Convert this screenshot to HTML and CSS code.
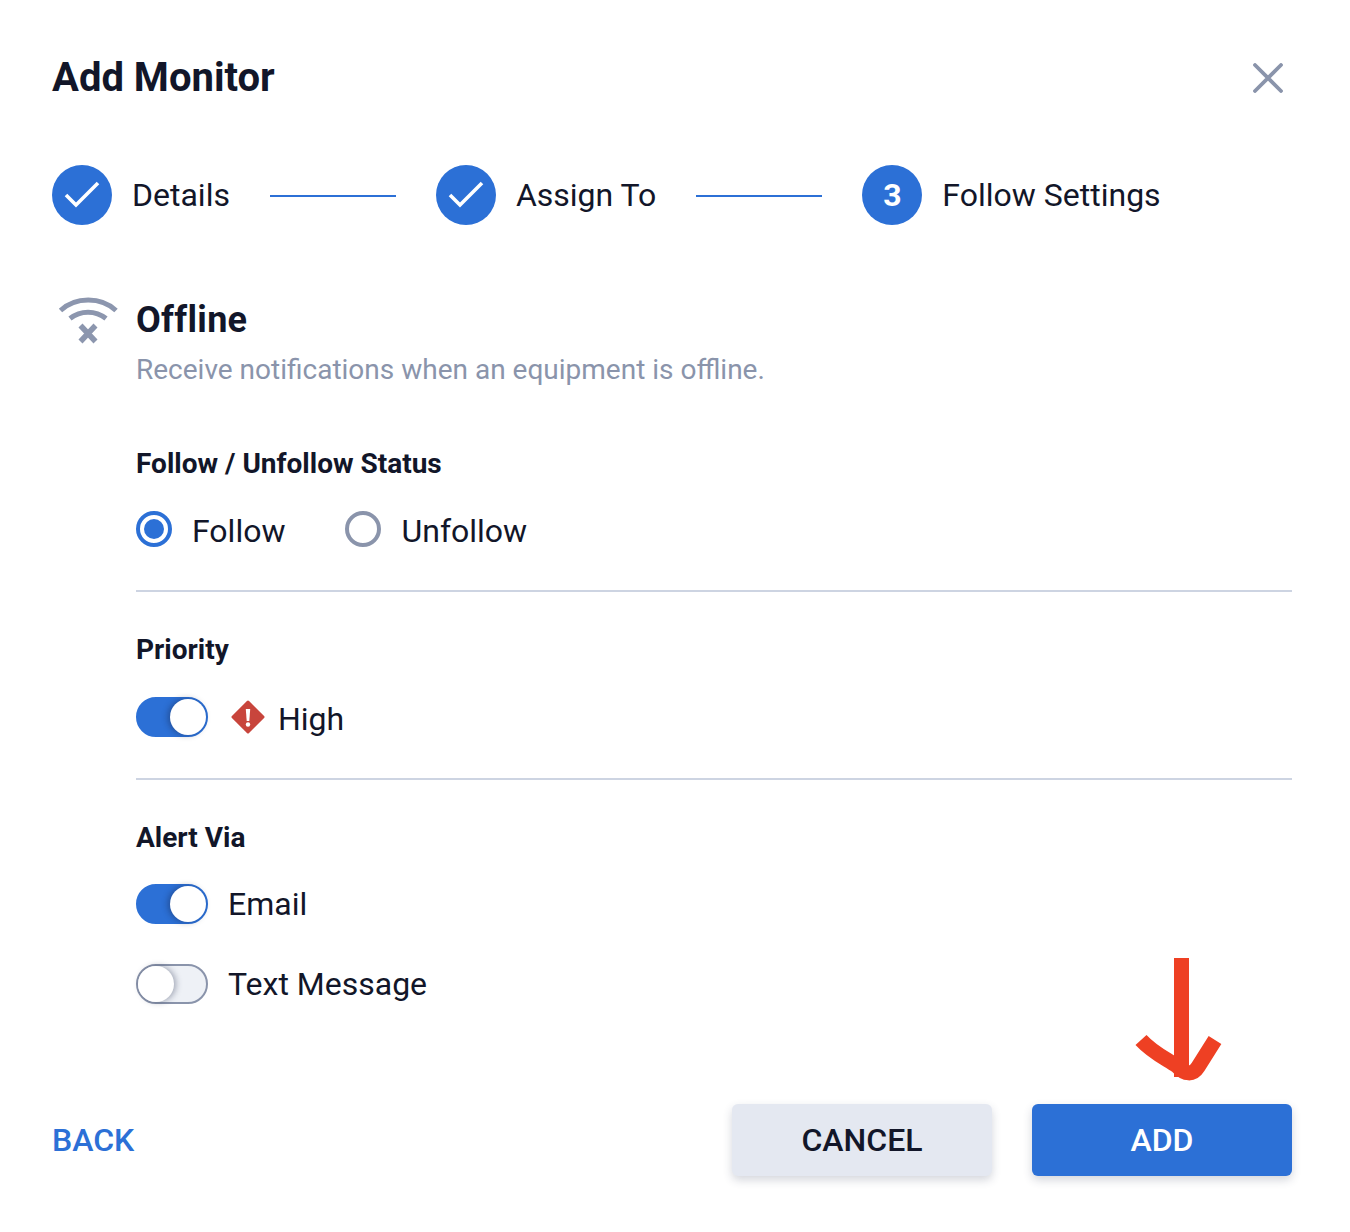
FILE: index.html
```html
<!DOCTYPE html>
<html lang="en">
<head>
<meta charset="utf-8">
<title>Add Monitor</title>
<link rel="stylesheet" href="styles.css">
</head>
<body>
<div class="dialog">
  <header class="head">
    <h1 class="title">Add Monitor</h1>
    <svg class="close" width="30" height="30" viewBox="0 0 30 30"><path d="M2 2 L28 28 M28 2 L2 28" fill="none" stroke="#8a94ab" stroke-width="3.8" stroke-linecap="round"/></svg>
  </header>
  <div class="stepper">
    <div class="step">
      <span class="dot"><svg width="36" height="28" viewBox="0 0 36 28"><path d="M2 14 L12 24 L34 2" fill="none" stroke="#fff" stroke-width="3.6"/></svg></span>
      <span class="step-label">Details</span>
    </div>
    <span class="line"></span>
    <div class="step">
      <span class="dot"><svg width="36" height="28" viewBox="0 0 36 28"><path d="M2 14 L12 24 L34 2" fill="none" stroke="#fff" stroke-width="3.6"/></svg></span>
      <span class="step-label">Assign To</span>
    </div>
    <span class="line"></span>
    <div class="step">
      <span class="dot num">3</span>
      <span class="step-label">Follow Settings</span>
    </div>
  </div>
  <div class="content">
    <svg class="wifi" width="62" height="50" viewBox="0 0 62 50">
      <path d="M3.500 15.500 C18.500 1.500 44 1.500 59 15.500" fill="none" stroke="#8c96ae" stroke-width="5"/>
      <path d="M13 23.500 C23.500 15 38.500 15 49 23.500" fill="none" stroke="#8c96ae" stroke-width="5"/>
      <path d="M23.500 30.500 L38.500 46.500 M38.500 30.500 L23.500 46.500" fill="none" stroke="#8c96ae" stroke-width="5.500"/>
    </svg>
    <div class="main">
      <h2 class="heading">Offline</h2>
      <p class="desc">Receive notifications when an equipment is offline.</p>
      <section class="section first">
        <h3 class="label">Follow / Unfollow Status</h3>
        <div class="radios">
          <span class="radio-item"><span class="radio on"></span><span class="opt">Follow</span></span>
          <span class="radio-item"><span class="radio"></span><span class="opt">Unfollow</span></span>
        </div>
      </section>
      <section class="section">
        <h3 class="label">Priority</h3>
        <div class="row priority">
          <span class="toggle on"><span class="knob"></span></span>
          <svg class="diamond" width="34" height="34" viewBox="0 0 34 34">
            <path d="M17 2 L32 17 L17 32 L2 17 Z" fill="#c8453c" stroke="#c8453c" stroke-width="3" stroke-linejoin="round"/>
            <path d="M14.800 9 H19.200 L18.300 21 H15.700 Z" fill="#fff"/>
            <circle cx="17" cy="24.500" r="2.200" fill="#fff"/>
          </svg>
          <span class="opt high">High</span>
        </div>
      </section>
      <section class="section last">
        <h3 class="label">Alert Via</h3>
        <div class="row email">
          <span class="toggle on"><span class="knob"></span></span>
          <span class="opt">Email</span>
        </div>
        <div class="row text-msg">
          <span class="toggle"><span class="knob"></span></span>
          <span class="opt">Text Message</span>
        </div>
      </section>
    </div>
  </div>
  <footer class="foot">
    <span class="back">BACK</span>
    <div class="actions">
      <button class="btn cancel" type="button">CANCEL</button>
      <button class="btn add" type="button">ADD</button>
    </div>
  </footer>
  <svg class="arrow" width="90" height="126" viewBox="0 0 90 126">
    <path d="M46.500 2 V121" fill="none" stroke="#ee4023" stroke-width="15"/>
    <path d="M6 84 C18 97 30 102 42 110 C50 119 58 119 63 111 L80 84" fill="none" stroke="#ee4023" stroke-width="15"/>
  </svg>
</div>
</body>
</html>
```
FILE: styles.css
```css
* { box-sizing: border-box; }
html, body { margin: 0; padding: 0; background: #fff; }
body { font-family: Roboto, "Liberation Sans", sans-serif; color: #121629; }
.dialog { position: relative; width: 1350px; height: 1232px; padding: 53px 58px 0 52px; }
.head { display: flex; justify-content: space-between; align-items: center; height: 50px; }
.title { margin: 0; font-size: 40px; line-height: 50px; font-weight: 700; }
.close { margin-right: 9px; }
.stepper { display: flex; align-items: center; margin-top: 62px; height: 60px; }
.step { display: flex; align-items: center; }
.dot { width: 60px; height: 60px; border-radius: 50%; background: #2c70d6; display: flex; align-items: center; justify-content: center; color: #fff; }
.num { font-size: 32px; font-weight: 700; }
.step-label { margin-left: 20px; font-size: 32px; line-height: 40px; }
.line { width: 126px; height: 2px; margin: 1px 40px 0; background: #2c70d6; }
.content { display: flex; margin-top: 70px; }
.wifi { flex: none; margin-left: 5px; margin-right: 17px; }
.main { flex: 1; min-width: 0; padding-top: 1px; }
.heading { margin: 0; font-size: 36px; line-height: 48px; font-weight: 700; font-variant-ligatures: none; letter-spacing: 0.3px; }
.desc { margin: 8px 0 0; font-size: 28px; line-height: 36px; color: #8a94ab; }
.section { border-top: 2px solid #cdd4e2; padding-top: 40px; }
.first { border-top: 0; padding-top: 0; margin-top: 58px; padding-bottom: 39px; }
.label { margin: 0; font-size: 28px; line-height: 36px; font-weight: 700; }
.radios { display: flex; margin-top: 29px; }
.radio-item { display: flex; align-items: center; margin-right: 60px; }
.radio { width: 36px; height: 36px; margin-bottom: 4px; border-radius: 50%; border: 4px solid #8a94ab; background: #fff; position: relative; }
.radio.on { border-color: #2c70d6; }
.radio.on::after { content: ""; position: absolute; left: 4px; top: 4px; width: 20px; height: 20px; border-radius: 50%; background: #2c70d6; }
.opt { font-size: 32px; line-height: 40px; }
.radio-item .opt { margin-left: 20px; }
.row { display: flex; align-items: center; }
.priority { margin-top: 27px; padding-bottom: 39px; }
.toggle { position: relative; flex: none; display: block; width: 72px; height: 40px; border-radius: 20px; border: 2px solid #8a94ab; background: #eef1f6; }
.toggle.on { background: #2c70d6; border-color: #2c70d6; }
.knob { position: absolute; left: 0; top: 0; width: 36px; height: 36px; border-radius: 50%; background: #fff; box-shadow: 2px 0 6px rgba(40, 50, 80, 0.4); }
.toggle.on .knob { left: 32px; box-shadow: -2px 0 6px rgba(20, 30, 60, 0.4); }
.diamond { margin-left: 23px; margin-right: 13px; }
.high { margin-top: 4px; }
.email { margin-top: 28px; }
.email .opt, .text-msg .opt { margin-left: 20px; }
.text-msg { margin-top: 40px; }
.foot { position: absolute; left: 52px; right: 58px; top: 1104px; display: flex; justify-content: space-between; align-items: center; }
.back { font-size: 32px; font-weight: 500; color: #2c70d6; }
.actions { display: flex; gap: 40px; }
.btn { height: 72px; border: 0; border-radius: 6px; font-family: inherit; font-size: 32px; font-weight: 500; box-shadow: 0 4px 10px rgba(40, 50, 80, 0.2); }
.cancel { width: 260px; background: #e4e8f1; color: #121629; }
.add { width: 260px; background: #2c70d6; color: #fff; }
.arrow { position: absolute; left: 1135px; top: 956px; }
```
